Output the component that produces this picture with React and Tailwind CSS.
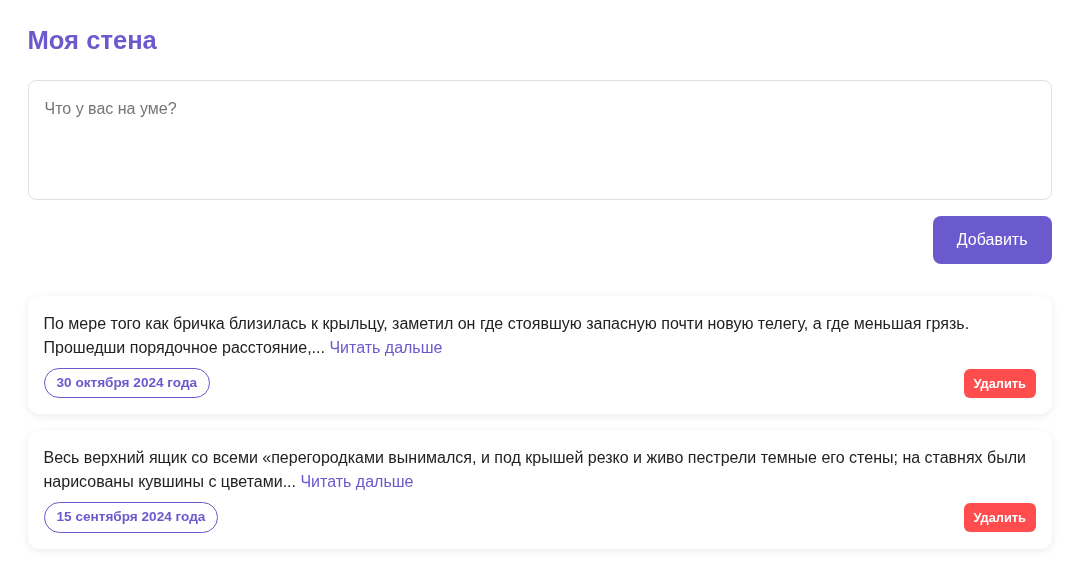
function Post({ text, date }) {
  return (
    <div className="bg-white rounded-xl p-4 shadow-[0_2px_8px_rgba(0,0,0,0.08)]">
      <p className="text-base leading-6 text-[#222222]">
        {text} <a className="text-[#6a5acd]">Читать дальше</a>
      </p>
      <div className="flex justify-between items-center mt-2">
        <span className="border border-[#6a5acd] text-[#6a5acd] rounded-[16px] px-3 py-[6px] text-[13.6px] leading-[16.4px] font-bold">{date}</span>
        <button className="bg-[#ff4d4d] text-white rounded-md px-[9.6px] py-[7px] text-[12.8px] leading-[15px] font-bold">Удалить</button>
      </div>
    </div>
  );
}
export default function App() {
  return (
    <div className="will-change-transform pl-[27.5px] pr-[36.5px] py-5 font-['Liberation_Sans',sans-serif] min-h-[573px]">
      <h1 className="text-[#6a5acd] text-[25.6px] leading-10 font-bold mb-5">Моя стена</h1>
      <textarea className="block w-full h-[120px] border border-[#e0e0e0] rounded-lg px-4 py-[19px] text-base leading-[18px] resize-none outline-none placeholder:text-[#757575]" placeholder="Что у вас на уме?" />
      <div className="flex justify-end mt-4 mb-8">
        <button className="bg-[#6a5acd] text-white rounded-lg px-6 h-12 text-base">Добавить</button>
      </div>
      <div className="flex flex-col gap-4">
        <Post date="30 октября 2024 года" text="По мере того как бричка близилась к крыльцу, заметил он где стоявшую запасную почти новую телегу, а где меньшая грязь. Прошедши порядочное расстояние,..." />
        <Post date="15 сентября 2024 года" text="Весь верхний ящик со всеми «перегородками вынимался, и под крышей резко и живо пестрели темные его стены; на ставнях были нарисованы кувшины с цветами..." />
      </div>
    </div>
  );
}
